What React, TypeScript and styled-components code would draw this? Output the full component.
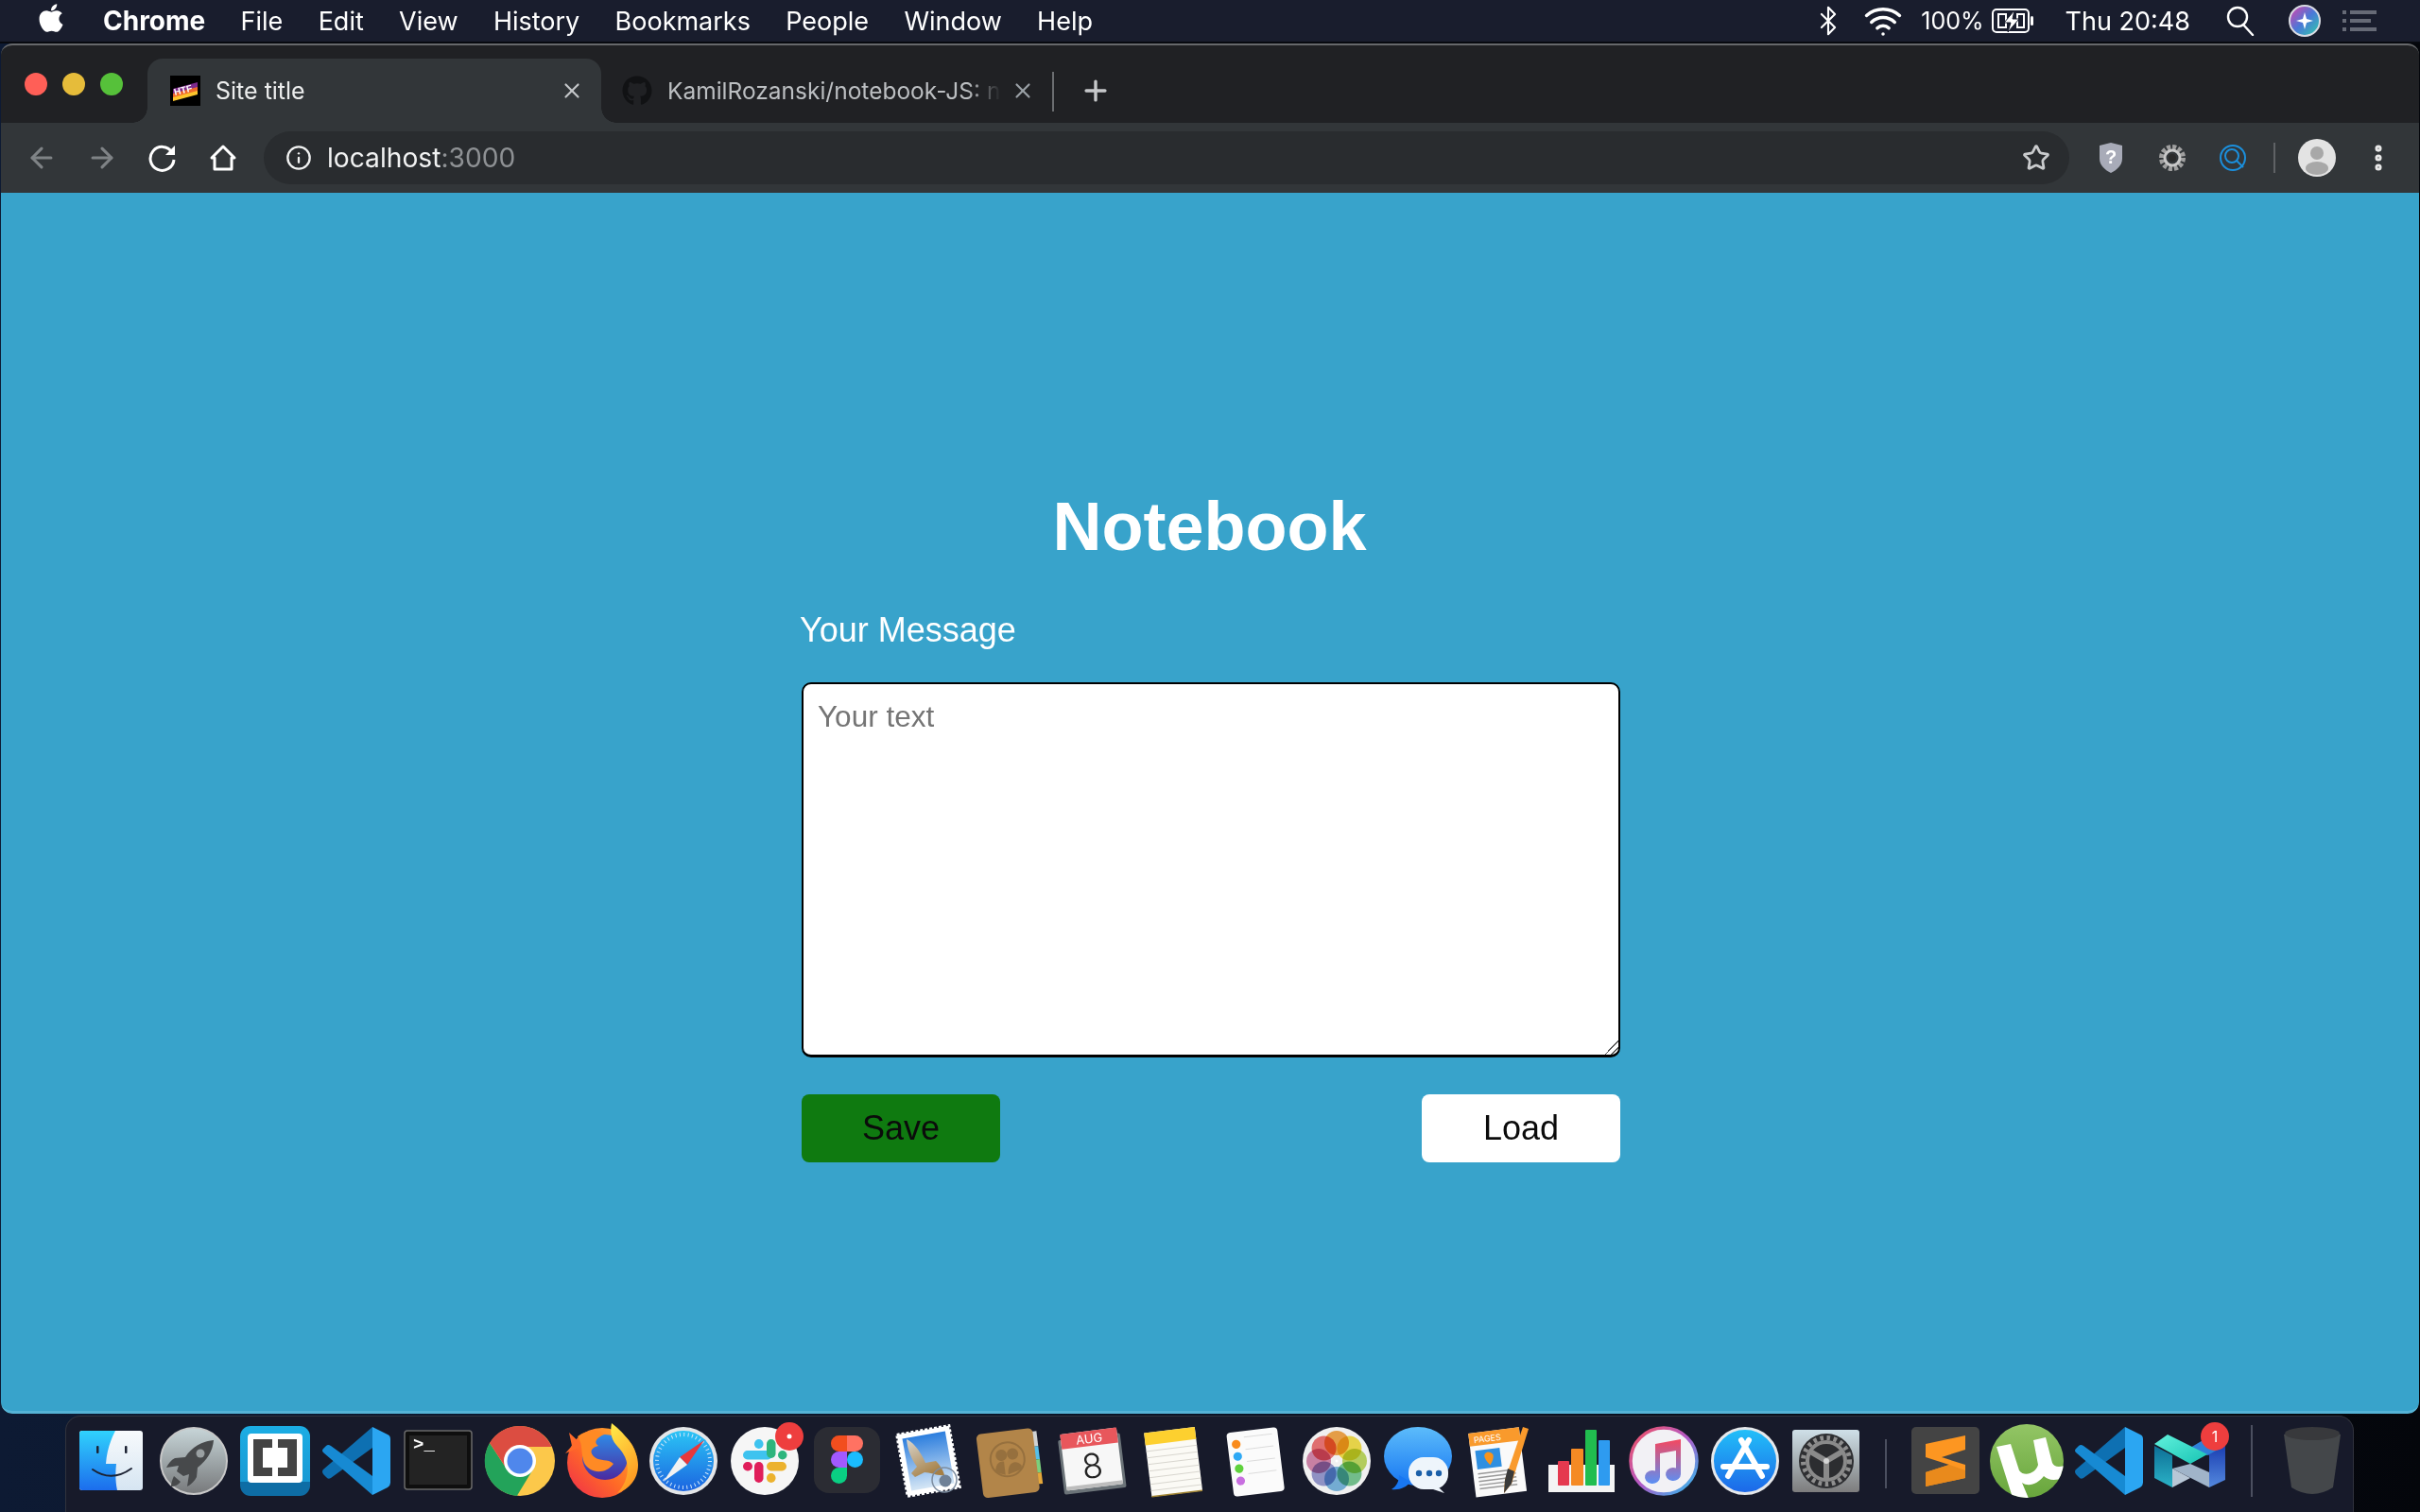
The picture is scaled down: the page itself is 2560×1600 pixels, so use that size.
import React from 'react';
import styled, { createGlobalStyle } from 'styled-components';
import { FaApple, FaGithub } from 'react-icons/fa';
import { ArrowLeft, ArrowRight, Bluetooth, Info, MoreVertical, Plus, Star, Wifi, X } from 'lucide-react';

const GlobalStyle = createGlobalStyle`
  html, body {
    margin: 0;
    padding: 0;
    background: #0b1222;
    overflow: hidden;
  }
`;

const Root = styled.div`
  width: 2560px;
  height: 1600px;
  display: flex;
  flex-direction: column;
  background: linear-gradient(90deg, #0d1a33 0%, #0a1122 60%, #04060b 100%);
  font-family: Inter, 'Noto Sans', sans-serif;
`;

/* macOS menu bar */
const MenuBar = styled.div`
  height: 44px;
  flex: none;
  display: flex;
  align-items: center;
  padding: 0 46px 0 39px;
  background: #191d2d;
  color: #fff;
  font-size: 27px;
  border-bottom: 2px solid #07090f;
`;

const AppleMark = styled(FaApple)`
  width: 30px;
  height: 34px;
  margin: -6px 40px 0 0;
`;

const MenuItem = styled.span<{ $bold?: boolean }>`
  margin-right: 37.3px;
  font-size: ${(p) => (p.$bold ? 28 : 27)}px;
  font-weight: ${(p) => (p.$bold ? 700 : 400)};
`;

const StatusArea = styled.div`
  margin-left: auto;
  display: flex;
  align-items: center;
`;

const StatusItem = styled.span<{ $gap: number; $size?: number }>`
  display: flex;
  align-items: center;
  margin-left: ${(p) => p.$gap}px;
  font-size: ${(p) => p.$size ?? 27}px;
`;

/* Browser window */
const Browser = styled.div`
  height: 1448px;
  flex: none;
  margin: 0 1px;
  display: flex;
  flex-direction: column;
  overflow: hidden;
  border-radius: 12px;
  border-top: 2px solid #66686b;
  background: #202124;
`;

const TabStrip = styled.div`
  height: 82px;
  flex: none;
  display: flex;
  align-items: flex-end;
  padding-left: 25px;
`;

const Lights = styled.div`
  align-self: flex-start;
  display: flex;
  gap: 16px;
  margin: 29px 26px 0 0;
`;

const Light = styled.span<{ $color: string }>`
  width: 24px;
  height: 24px;
  border-radius: 50%;
  background: ${(p) => p.$color};
`;

const ActiveTab = styled.div`
  position: relative;
  width: 480px;
  height: 68px;
  display: flex;
  align-items: center;
  padding: 0 18px 0 24px;
  box-sizing: border-box;
  border-radius: 16px 16px 0 0;
  background: #323639;
  color: #eceded;
  font-size: 25px;

  &::before,
  &::after {
    content: '';
    position: absolute;
    bottom: 0;
    width: 16px;
    height: 16px;
    background: radial-gradient(circle at var(--c), #202124 15.5px, #323639 16px);
  }
  &::before {
    left: -16px;
    --c: 0 0;
  }
  &::after {
    right: -16px;
    --c: 100% 0;
  }
`;

const Favicon = styled.svg`
  width: 32px;
  height: 32px;
  flex: none;
  margin-right: 16px;
`;

const TabClose = styled(X)<{ $dim?: boolean }>`
  width: 26px;
  height: 26px;
  flex: none;
  margin-left: auto;
  color: ${(p) => (p.$dim ? '#9aa0a6' : '#c4c7c9')};
`;

const IdleTab = styled.div`
  width: 477px;
  height: 68px;
  display: flex;
  align-items: center;
  padding: 0 18px 0 22px;
  box-sizing: border-box;
  color: #bcbfc2;
  font-size: 24.5px;
`;

const GithubMark = styled(FaGithub)`
  width: 32px;
  height: 32px;
  flex: none;
  margin-right: 16px;
  color: #111214;
`;

const FadedTitle = styled.span`
  width: 353px;
  overflow: hidden;
  white-space: nowrap;
  -webkit-mask-image: linear-gradient(90deg, #000 90%, transparent 100%);
  mask-image: linear-gradient(90deg, #000 90%, transparent 100%);
`;

const TabDivider = styled.span`
  width: 2px;
  height: 42px;
  margin-bottom: 12px;
  align-self: flex-end;
  background: #6b6e71;
`;

const NewTab = styled(Plus)`
  width: 34px;
  height: 34px;
  margin: 0 0 17px 27px;
  color: #c6c8ca;
`;

const Toolbar = styled.div`
  height: 74px;
  flex: none;
  display: flex;
  align-items: center;
  padding-left: 25px;
  background: #323639;
`;

const NavButton = styled.span<{ $dim?: boolean }>`
  width: 36px;
  height: 36px;
  display: flex;
  align-items: center;
  justify-content: center;
  margin-right: 28px;
  color: ${(p) => (p.$dim ? '#7f8386' : '#fff')};
`;

const Omnibox = styled.div`
  width: 1910px;
  height: 56px;
  margin-left: -3px;
  display: flex;
  align-items: center;
  padding: 0 20px 0 23px;
  box-sizing: border-box;
  border-radius: 28px;
  background: #292c2f;
  font-size: 28.2px;
  color: #f1f2f2;
`;

const Host = styled.span`
  margin-left: 16px;
`;

const Port = styled.span`
  color: #8e9194;
`;

const BookmarkStar = styled(Star)`
  width: 30px;
  height: 30px;
  margin-left: auto;
  color: #c9cbcd;
`;

const Extensions = styled.div`
  display: flex;
  align-items: center;
  margin-left: 29px;
`;

const ExtensionSlot = styled.span<{ $width: number; $gap?: number }>`
  width: ${(p) => p.$width}px;
  margin-left: ${(p) => p.$gap ?? 0}px;
  display: flex;
  justify-content: center;
  align-items: center;
  color: #e8e8e8;
`;

const ToolbarDivider = styled.span`
  width: 2px;
  height: 32px;
  margin: 0 24px 0 28px;
  background: #5f6265;
`;

/* The page itself */
const Page = styled.main`
  flex: 1;
  display: flex;
  flex-direction: column;
  align-items: center;
  padding-top: 312px;
  box-sizing: border-box;
  background: #38a3cb;
  border-bottom: 3px solid #55b3d6;
  font-family: 'Liberation Sans', Arial, sans-serif;
  border-radius: 0 0 12px 12px;
`;

const Notebook = styled.div`
  width: 866px;
  margin-left: 2px;
  display: flex;
  flex-direction: column;
`;

const Title = styled.h1`
  margin: 0 0 47px;
  padding-right: 3px;
  font-size: 72px;
  font-weight: 700;
  line-height: 83px;
  text-align: center;
  color: #fff;
`;

const FieldLabel = styled.label`
  display: block;
  margin: 0 0 35px -2px;
  font-size: 36px;
  line-height: 41px;
  color: #fff;
`;

const MessageInput = styled.textarea`
  display: block;
  width: 866px;
  height: 397px;
  padding: 16px 15px;
  box-sizing: border-box;
  border: 2px solid #000;
  border-bottom-width: 3px;
  border-radius: 10px;
  outline: none;
  background: #fff;
  font-family: 'Liberation Sans', Arial, sans-serif;
  font-size: 31.5px;

  &::-webkit-resizer {
    background: linear-gradient(
      135deg,
      transparent 50%,
      #555 50%,
      #555 56%,
      transparent 56%,
      transparent 72%,
      #555 72%,
      #555 78%,
      transparent 78%
    );
  }
`;

const Actions = styled.div`
  display: flex;
  justify-content: space-between;
  margin-top: 39px;
`;

const ActionButton = styled.button<{ $color: string }>`
  width: 210px;
  height: 72px;
  border: none;
  border-radius: 8px;
  background: ${(p) => p.$color};
  color: #0b0b0b;
  font-family: 'Liberation Sans', Arial, sans-serif;
  font-size: 36px;
`;

/* Dock */
const Dock = styled.div`
  width: 2421px;
  height: 102px;
  flex: none;
  box-sizing: border-box;
  margin: 2px 0 0 69px;
  padding: 7px 0 0 5px;
  display: flex;
  align-items: flex-start;
  border-radius: 16px 16px 0 0;
  border-top: 1px solid #30323c;
  border-left: 1px solid #30323c;
  border-right: 1px solid #30323c;
  background: #171a2a;
`;

const DockSlot = styled.div`
  width: 86.4px;
  flex: none;
  display: flex;
  justify-content: center;
`;

const DockDivider = styled.span<{ $height: number; $top: number; $width: number }>`
  width: ${(p) => p.$width}px;
  height: ${(p) => p.$height}px;
  flex: none;
  margin-top: ${(p) => p.$top}px;
  display: flex;
  justify-content: center;

  &::after {
    content: '';
    width: 2px;
    background: #4b4f5f;
  }
`;

const IconSvg = styled.svg`
  width: 80px;
  height: 80px;
  overflow: visible;
  display: block;
`;

const Icon = ({ children }: { children: React.ReactNode }) => (
  <IconSvg viewBox="0 0 80 80">{children}</IconSvg>
);

const Finder = () => (
  <Icon>
    <defs>
      <linearGradient id="fb" x1="0" y1="0" x2="0" y2="1">
        <stop offset="0" stopColor="#30d2fc" />
        <stop offset="1" stopColor="#1c6ded" />
      </linearGradient>
      <linearGradient id="fw" x1="0" y1="0" x2="0" y2="1">
        <stop offset="0" stopColor="#f7fafc" />
        <stop offset="1" stopColor="#d6e5f2" />
      </linearGradient>
    </defs>
    <rect x="6" y="8" width="67" height="63" rx="3" fill="url(#fw)" />
    <path d="M9 8H44C38 20 35 30 34 43H45C44 52 44 62 46 71H9a3 3 0 0 1-3-3V11a3 3 0 0 1 3-3Z" fill="url(#fb)" />
    <rect x="24" y="24" width="2.5" height="8" rx="1" fill="#1c2233" />
    <rect x="54" y="24" width="2.5" height="8" rx="1" fill="#1c2233" />
    <path d="M20 49Q40 63 61 48" fill="none" stroke="#1c2233" strokeWidth="2" strokeLinecap="round" />
  </Icon>
);

const Launchpad = () => (
  <Icon>
    <defs>
      <linearGradient id="lp" x1="0" y1="0" x2="0" y2="1">
        <stop offset="0" stopColor="#c7d5d8" />
        <stop offset="1" stopColor="#77797b" />
      </linearGradient>
    </defs>
    <circle cx="40" cy="40" r="35" fill="url(#lp)" stroke="#c8c8c8" strokeWidth="2" />
    <path d="M61 18C49 19 38 25 31 36L20 37C16 39 13 43 11 47L24 45L22 51L29 56L35 54L33 67C37 65 41 61 43 57L44 47C54 39 60 30 61 18Z" fill="#47494b" />
    <path d="M19 56C17 60 16 64 16 67C20 67 24 65 26 62Z" fill="#47494b" />
    <circle cx="47" cy="32" r="4.5" fill="#9aa0a2" />
  </Icon>
);

const BracketsApp = () => (
  <Icon>
    <defs>
      <linearGradient id="br" x1="0" y1="0" x2="0" y2="1">
        <stop offset="0" stopColor="#1badE4" />
        <stop offset="0.8" stopColor="#1a9ad4" />
        <stop offset="0.8" stopColor="#0e6da5" />
        <stop offset="1" stopColor="#0e6da5" />
      </linearGradient>
    </defs>
    <rect x="3" y="3" width="74" height="74" rx="11" fill="url(#br)" />
    <rect x="11" y="11" width="58" height="52" rx="4" fill="#fff" />
    <path d="M17 17H37V26H27V47H37V56H17Z" fill="#444" />
    <path d="M63 17H43V26H53V47H43V56H63Z" fill="#444" />
  </Icon>
);

const VsCode = () => (
  <Icon>
    <path d="M57 4V26L13 58Q10 60 8 57L5 54Q3 51 5 49Z" fill="#0e70b2" />
    <path d="M5 31Q3 29 5 27L8 24Q10 22 13 24L57 56V76Z" fill="#178ad3" />
    <path d="M57 4L73 12Q76 13 76 17V63Q76 66 73 68L57 76Z" fill="#2ba6f2" />
  </Icon>
);

const TerminalApp = () => (
  <Icon>
    <rect x="4" y="8" width="71" height="62" rx="3" fill="#0e0e0e" stroke="#6a6a6a" strokeWidth="1.5" />
    <rect x="9" y="13" width="61" height="52" fill="#232323" />
    <text x="13" y="28" fill="#fff" fontFamily="'Liberation Mono', monospace" fontSize="19" fontWeight="700">
      &gt;_
    </text>
  </Icon>
);

const ChromeApp = () => (
  <Icon>
    <circle cx="40" cy="40" r="37" fill="#fcc84a" />
    <path d="M8 21A37 37 0 0 0 36.8 76.9L55 47H25Z" fill="#23a35a" />
    <path d="M8 21A37 37 0 0 1 73.6 25H40L25 47Z" fill="#dc4d41" />
    <circle cx="40" cy="40" r="17" fill="#fff" />
    <circle cx="40" cy="40" r="13.5" fill="#4f87ec" />
  </Icon>
);

const Firefox = () => (
  <Icon>
    <defs>
      <linearGradient id="ffo" x1="1" y1="0" x2="0" y2="1">
        <stop offset="0" stopColor="#ffb52e" />
        <stop offset="0.55" stopColor="#ff6a26" />
        <stop offset="1" stopColor="#ef2a4e" />
      </linearGradient>
      <linearGradient id="ffy" x1="0" y1="0" x2="0.4" y2="1">
        <stop offset="0" stopColor="#ffec4a" />
        <stop offset="1" stopColor="#ff9a22" />
      </linearGradient>
      <linearGradient id="ffb" x1="0.5" y1="0" x2="0.5" y2="1">
        <stop offset="0" stopColor="#2f8ae6" />
        <stop offset="1" stopColor="#4b2aa0" />
      </linearGradient>
    </defs>
    <circle cx="40" cy="42" r="37" fill="url(#ffo)" />
    <path d="M5 10L8 24L1 32L20 24Z" fill="#ff6a2a" />
    <circle cx="43" cy="36" r="24" fill="url(#ffb)" />
    <path d="M14 14C24 7 34 6 42 12C35 15 30 20 36 24C28 26 26 31 32 36C38 41 46 37 52 43C42 56 26 52 21 42C17 32 20 22 14 14Z" fill="#ff8a24" />
    <path d="M50 0C68 14 78 30 78 44C78 60 68 70 56 74C68 62 70 44 62 32C58 24 46 20 50 0Z" fill="url(#ffy)" />
  </Icon>
);

const SafariApp = () => (
  <Icon>
    <defs>
      <linearGradient id="sf" x1="0" y1="0" x2="0" y2="1">
        <stop offset="0" stopColor="#2bc4f5" />
        <stop offset="1" stopColor="#1b64e0" />
      </linearGradient>
    </defs>
    <circle cx="40" cy="40" r="36" fill="#e4e6e8" />
    <circle cx="40" cy="40" r="32" fill="url(#sf)" />
    <circle cx="40" cy="40" r="28" fill="none" stroke="#cfe6fa" strokeWidth="4" strokeDasharray="1 3.4" />
    <polygon points="62,18 36,36 44,44" fill="#e8383c" />
    <polygon points="18.6,62 36,36 44,44" fill="#f2f2f2" />
  </Icon>
);

const DockBadge = ({ label }: { label?: string }) => (
  <>
    <circle cx="66" cy="14" r="15" fill="#ee3e3e" />
    {label ? (
      <text x="66" y="20" textAnchor="middle" fill="#fff" fontFamily="Inter, sans-serif" fontSize="16">
        {label}
      </text>
    ) : (
      <circle cx="66" cy="14" r="2.5" fill="#fff" />
    )}
  </>
);

const Slack = () => (
  <Icon>
    <circle cx="40" cy="40" r="36" fill="#f6f6f6" />
    <rect x="17" y="29" width="31" height="9.5" rx="4.7" fill="#3ec3ef" />
    <rect x="29" y="17" width="9.5" height="10" rx="4.7" fill="#3ec3ef" />
    <rect x="42" y="17" width="9.5" height="20" rx="4.7" fill="#2eb57d" />
    <rect x="54" y="29" width="9.5" height="9.5" rx="4.7" fill="#2eb57d" />
    <rect x="17" y="41" width="10" height="9.5" rx="4.7" fill="#e01e5a" />
    <rect x="29" y="41" width="9.5" height="22" rx="4.7" fill="#e01e5a" />
    <rect x="42" y="41" width="21" height="9.5" rx="4.7" fill="#ecb22e" />
    <rect x="42" y="53" width="9.5" height="10" rx="4.7" fill="#ecb22e" />
    <DockBadge />
  </Icon>
);

const Figma = () => (
  <Icon>
    <rect x="5" y="4" width="70" height="70" rx="16" fill="#2b2c33" />
    <path d="M40 13H31.5a8.5 8.5 0 0 0 0 17H40Z" fill="#f24e1e" />
    <path d="M40 13H48.5a8.5 8.5 0 0 1 0 17H40Z" fill="#ff7262" />
    <path d="M40 30H31.5a8.5 8.5 0 0 0 0 17H40Z" fill="#a259ff" />
    <circle cx="48.5" cy="38.5" r="8.5" fill="#1abcfe" />
    <path d="M40 47H31.5a8.5 8.5 0 1 0 8.5 8.5Z" fill="#0acf83" />
  </Icon>
);

const MailApp = () => (
  <Icon>
    <defs>
      <linearGradient id="ml" x1="0" y1="0" x2="0" y2="1">
        <stop offset="0" stopColor="#2c7ede" />
        <stop offset="1" stopColor="#d5e6f5" />
      </linearGradient>
      <linearGradient id="hawk" x1="0" y1="0" x2="0.6" y2="1">
        <stop offset="0" stopColor="#d9d6cf" />
        <stop offset="1" stopColor="#a57f45" />
      </linearGradient>
    </defs>
    <g transform="rotate(-10 40 40)">
      <rect x="12" y="7" width="56" height="66" fill="#fff" stroke="#fff" strokeWidth="3" strokeDasharray="3 2" />
      <rect x="17" y="12" width="46" height="56" fill="url(#ml)" />
    </g>
    <path d="M17 17C24 20 32 30 37 42L48 40C52 44 56 50 57 55C50 56 42 52 36 52L26 57L22 53L28 46C22 38 18 28 17 17Z" fill="url(#hawk)" />
    <circle cx="57" cy="60" r="13" fill="none" stroke="#7d8da0" strokeWidth="1.5" />
    <circle cx="58" cy="61" r="6.5" fill="#6f8197" />
  </Icon>
);

const ContactsApp = () => (
  <Icon>
    <g transform="rotate(-7 40 40)">
      <rect x="66" y="12" width="6" height="16" fill="#cfd2d4" />
      <rect x="66" y="28" width="6" height="14" fill="#56bfe8" />
      <rect x="66" y="42" width="6" height="14" fill="#7ccf7c" />
      <rect x="66" y="56" width="6" height="12" fill="#e5a83a" />
      <rect x="8" y="8" width="60" height="68" rx="5" fill="#b28549" />
      <circle cx="38" cy="38" r="18" fill="none" stroke="#96703e" strokeWidth="2" />
      <circle cx="32" cy="33" r="6" fill="#96703e" />
      <circle cx="44" cy="33" r="6" fill="#96703e" />
      <path d="M24 50C24 42 30 38 34 40V54Z" fill="#96703e" />
      <path d="M37 54C37 42 46 38 52 46V50Z" fill="#96703e" />
    </g>
  </Icon>
);

const CalendarApp = () => (
  <Icon>
    <g transform="rotate(-7 40 40)">
      <rect x="7" y="14" width="66" height="58" rx="2" fill="#6b7378" />
      <rect x="10" y="8" width="60" height="60" rx="2" fill="#f7f7f7" />
      <path d="M10 8H70V24H10Z" fill="#e8575c" />
      <text x="40" y="21" textAnchor="middle" fill="#fff" fontFamily="Inter, sans-serif" fontSize="13">
        AUG
      </text>
      <text x="40" y="58" textAnchor="middle" fill="#222" fontFamily="Inter, sans-serif" fontSize="36" fontWeight="300">
        8
      </text>
      <rect x="10" y="64" width="60" height="4" fill="#bdbdbd" />
    </g>
  </Icon>
);

const NotesApp = () => (
  <Icon>
    <g transform="rotate(-7 40 40)">
      <rect x="13" y="7" width="54" height="68" fill="#fbfaf5" />
      <rect x="13" y="7" width="54" height="13" fill="#fdd02f" />
      {[26, 33, 40, 47, 54, 61, 68].map((y) => (
        <rect key={y} x="13" y={y} width="54" height="1" fill="#d8d6cf" />
      ))}
      <rect x="13" y="74" width="54" height="1.5" fill="#a08330" />
    </g>
  </Icon>
);

const reminderDots: [string, number][] = [
  ['#f98b1c', 20],
  ['#2ea9f5', 33],
  ['#5fd23c', 46],
  ['#c86fe0', 59],
];

const RemindersApp = () => (
  <Icon>
    <g transform="rotate(-7 40 40)">
      <rect x="13" y="7" width="54" height="68" rx="4" fill="#fbfbfb" />
      {reminderDots.map(([color, y]) => (
        <React.Fragment key={color}>
          <circle cx="22" cy={y} r="4.6" fill={color} />
          <rect x="31" y={y - 7} width="30" height="1" fill="#dcdcdc" />
        </React.Fragment>
      ))}
    </g>
  </Icon>
);

const PhotosApp = () => (
  <Icon>
    <circle cx="40" cy="40" r="36" fill="#f0f0f0" />
    {['#f2a03b', '#f4dd3e', '#b9d654', '#6dc48a', '#70b1de', '#8f93cd', '#d17ea6', '#ec6a6a'].map((color, i) => (
      <circle
        key={color}
        cx="40"
        cy="21"
        r="13"
        fill={color}
        opacity="0.92"
        style={{ mixBlendMode: 'multiply' }}
        transform={`rotate(${i * 45} 40 40)`}
      />
    ))}
    <circle cx="40" cy="40" r="1.5" fill="#fff" />
  </Icon>
);

const MessagesApp = () => (
  <Icon>
    <defs>
      <linearGradient id="mg" x1="0" y1="0" x2="0" y2="1">
        <stop offset="0" stopColor="#5cbcfb" />
        <stop offset="1" stopColor="#1877f2" />
      </linearGradient>
    </defs>
    <ellipse cx="40" cy="35" rx="36" ry="31" fill="url(#mg)" />
    <path d="M20 55C20 62 17 67 12 70C20 71 28 68 32 62Z" fill="#1877f2" />
    <rect x="30" y="36" width="42" height="34" rx="16" fill="#eef5fb" />
    <path d="M60 66L68 74L56 70Z" fill="#eef5fb" />
    {[41, 52, 62].map((x) => (
      <circle key={x} cx={x} cy="53" r="3.2" fill="#1a5fa8" />
    ))}
  </Icon>
);

const PagesApp = () => (
  <Icon>
    <g transform="rotate(-7 40 40)">
      <rect x="10" y="7" width="54" height="68" fill="#fafafa" />
      <rect x="10" y="7" width="54" height="14" fill="#f99a2c" />
      <text x="15" y="18" fill="#fff" fontFamily="Inter, sans-serif" fontSize="9">
        PAGES
      </text>
      <rect x="15" y="26" width="26" height="20" fill="#2f8fe0" />
      <path d="M28 29C34 30 36 34 29 43C22 34 23 30 28 29Z" fill="#f7941d" />
      {[50, 54, 58, 62, 66].map((y) => (
        <rect key={y} x="15" y={y} width="40" height="1.5" fill="#9a9a9a" />
      ))}
    </g>
    <path d="M64 4L70 6L52 64L44 74L45 60Z" fill="#f99a2c" />
    <path d="M48 48L55 51L52 64L44 74L45 60Z" fill="#3a3a3a" />
  </Icon>
);

const NumbersApp = () => (
  <Icon>
    <rect x="5" y="44" width="70" height="29" fill="#f4f4f4" />
    <rect x="15" y="40" width="12" height="26" rx="1" fill="#e5394f" />
    <rect x="29" y="27" width="13" height="39" rx="1" fill="#f58a24" />
    <rect x="44" y="7" width="12" height="59" rx="1" fill="#21bd4f" />
    <rect x="58" y="18" width="12" height="48" rx="1" fill="#2e9bf0" />
  </Icon>
);

const ITunes = () => (
  <Icon>
    <defs>
      <linearGradient id="it" x1="0" y1="0" x2="1" y2="1">
        <stop offset="0" stopColor="#f4515e" />
        <stop offset="0.5" stopColor="#b25ac8" />
        <stop offset="1" stopColor="#26c0ef" />
      </linearGradient>
      <linearGradient id="nt" x1="0" y1="0" x2="0" y2="1">
        <stop offset="0" stopColor="#f5475f" />
        <stop offset="1" stopColor="#5a90f5" />
      </linearGradient>
    </defs>
    <circle cx="40" cy="40" r="35" fill="#f2f1f5" stroke="url(#it)" strokeWidth="3.5" />
    <path d="M31 22L58 17V54A8 7 0 1 1 53 47.5V29L36 32V57A8 7 0 1 1 31 50.5Z" fill="url(#nt)" />
  </Icon>
);

const AppStore = () => (
  <Icon>
    <defs>
      <linearGradient id="as" x1="0" y1="0" x2="0" y2="1">
        <stop offset="0" stopColor="#22c1f9" />
        <stop offset="1" stopColor="#1c66e8" />
      </linearGradient>
    </defs>
    <circle cx="40" cy="40" r="34.5" fill="url(#as)" stroke="#e6e8ea" strokeWidth="3" />
    <path d="M22 56L44 18M36 18L58 56M17 46H63" fill="none" stroke="#fff" strokeWidth="6" strokeLinecap="round" />
  </Icon>
);

const SystemPrefs = () => (
  <Icon>
    <defs>
      <linearGradient id="sp" x1="0" y1="0" x2="0" y2="1">
        <stop offset="0" stopColor="#cfe0e8" />
        <stop offset="1" stopColor="#7d7d7d" />
      </linearGradient>
    </defs>
    <rect x="4" y="7" width="71" height="66" rx="3" fill="url(#sp)" />
    <circle cx="40" cy="40" r="29" fill="#2e2f32" />
    <circle cx="40" cy="40" r="24.5" fill="none" stroke="#8f8f8f" strokeWidth="5" strokeDasharray="3.6 3.6" />
    <circle cx="40" cy="40" r="20" fill="#2c2d30" stroke="#8a8a8a" strokeWidth="4" />
    <path d="M40 40V60M40 40L23 30M40 40L57 30" stroke="#8a8a8a" strokeWidth="6" />
    <circle cx="40" cy="40" r="3" fill="#d5d5d5" />
  </Icon>
);

const Sublime = () => (
  <Icon>
    <rect x="4" y="4" width="72" height="71" rx="5" fill="#444" />
    <path d="M61 13V28L36 36L61 44V58L19 67V52L44 44L19 36V22Z" fill="#fd9621" />
    <path d="M19 52L44 44L61 50V58L19 67Z" fill="#e98a1c" />
  </Icon>
);

const UTorrent = () => (
  <Icon>
    <defs>
      <linearGradient id="ut" x1="0" y1="0" x2="0" y2="1">
        <stop offset="0" stopColor="#93c565" />
        <stop offset="1" stopColor="#68a63c" />
      </linearGradient>
      <clipPath id="utc">
        <circle cx="40" cy="40" r="39" />
      </clipPath>
    </defs>
    <circle cx="40" cy="40" r="39" fill="url(#ut)" />
    <path
      clipPath="url(#utc)"
      d="M8 25L23 22L32 50C38 58 50 52 52 44L47 18L60 15L67 42C69 46 73 47 80 45V57C70 62 62 60 58 56C52 64 42 68 35 63L43 82H26Z"
      fill="#fff"
    />
  </Icon>
);

const MindNode = () => (
  <Icon>
    <defs>
      <linearGradient id="mnl" x1="0" y1="0" x2="0" y2="1">
        <stop offset="0" stopColor="#0d6f96" />
        <stop offset="1" stopColor="#2bb3c7" />
      </linearGradient>
      <linearGradient id="mnr" x1="0" y1="0" x2="0" y2="1">
        <stop offset="0" stopColor="#1b3fb2" />
        <stop offset="1" stopColor="#5489de" />
      </linearGradient>
      <linearGradient id="mnt" x1="0" y1="0" x2="1" y2="1">
        <stop offset="0" stopColor="#62f2dd" />
        <stop offset="1" stopColor="#18c4b4" />
      </linearGradient>
    </defs>
    <path d="M2 24L21 34V68L2 58Z" fill="url(#mnl)" />
    <path d="M21 48L40 43L60 52V68L21 48Z" fill="#a0b4c9" />
    <path d="M21 68V48L40 58Z" fill="#b8c7d6" />
    <path d="M58 33L77 24V60L60 68V34Z" fill="url(#mnr)" />
    <path d="M40 26L60 14L77 24L58 34Z" fill="#2f7fd8" />
    <path d="M2 22L16 12L58 33L40 43Z" fill="url(#mnt)" />
    <DockBadge label="1" />
  </Icon>
);

const Trash = () => (
  <Icon>
    <path d="M10 12Q40 0 70 12L62 68Q40 82 18 68Z" fill="#44474a" />
    <ellipse cx="40" cy="11" rx="29" ry="7" fill="#38393c" />
  </Icon>
);

const mainApps = [
  Finder, Launchpad, BracketsApp, VsCode, TerminalApp, ChromeApp, Firefox, SafariApp, Slack, Figma, MailApp,
  ContactsApp, CalendarApp, NotesApp, RemindersApp, PhotosApp, MessagesApp, PagesApp, NumbersApp, ITunes, AppStore,
  SystemPrefs,
];
const recentApps = [Sublime, UTorrent, VsCode, MindNode];

const BatteryIcon = () => (
  <svg width="46" height="28" viewBox="0 0 46 28">
    <rect x="1" y="2" width="38" height="24" rx="4" fill="none" stroke="#fff" strokeWidth="2" />
    <rect x="41" y="9" width="3" height="10" rx="1.5" fill="#fff" />
    <path d="M7 7H15V21H7ZM27 7H34V21H27Z" fill="none" stroke="#fff" strokeWidth="2" />
    <path d="M24 3L13 16H20L17 26L29 12H22Z" fill="#fff" stroke="#191d2d" />
  </svg>
);

const SearchGlass = () => (
  <svg width="30" height="32" viewBox="0 0 30 32" fill="none" stroke="#fff" strokeWidth="2.4">
    <circle cx="12" cy="12" r="10" />
    <path d="M18 20L28 31" strokeLinecap="round" />
  </svg>
);

const SiriIcon = () => (
  <svg width="34" height="34" viewBox="0 0 34 34">
    <defs>
      <linearGradient id="siri" x1="0" y1="0" x2="1" y2="1">
        <stop offset="0" stopColor="#e23fa8" />
        <stop offset="0.5" stopColor="#4a78d8" />
        <stop offset="1" stopColor="#2fd0a8" />
      </linearGradient>
    </defs>
    <circle cx="17" cy="17" r="16" fill="url(#siri)" stroke="#d9dbe3" strokeWidth="2" />
    <path d="M17 8L19 15L26 17L19 19L17 26L15 19L8 17L15 15Z" fill="#fff" />
  </svg>
);

const NotificationIcon = () => (
  <svg width="36" height="24" viewBox="0 0 36 24" fill="#666a76">
    <rect x="0" y="1" width="4" height="4" />
    <rect x="8" y="1" width="28" height="4" />
    <rect x="0" y="10" width="4" height="4" />
    <rect x="8" y="10" width="22" height="4" />
    <rect x="0" y="19" width="4" height="4" />
    <rect x="8" y="19" width="28" height="4" />
  </svg>
);

const App = () => (
  <Root>
    <GlobalStyle />
    <MenuBar>
      <AppleMark />
      <MenuItem $bold>Chrome</MenuItem>
      {['File', 'Edit', 'View', 'History', 'Bookmarks', 'People', 'Window', 'Help'].map((item) => (
        <MenuItem key={item}>{item}</MenuItem>
      ))}
      <StatusArea>
        <StatusItem $gap={0}>
          <Bluetooth size={34} strokeWidth={1.5} />
        </StatusItem>
        <StatusItem $gap={20}>
          <Wifi size={42} strokeWidth={2} />
        </StatusItem>
        <StatusItem $gap={19} $size={25}>
          100%
        </StatusItem>
        <StatusItem $gap={8}>
          <BatteryIcon />
        </StatusItem>
        <StatusItem $gap={32}>Thu 20:48</StatusItem>
        <StatusItem $gap={38}>
          <SearchGlass />
        </StatusItem>
        <StatusItem $gap={36}>
          <SiriIcon />
        </StatusItem>
        <StatusItem $gap={23}>
          <NotificationIcon />
        </StatusItem>
      </StatusArea>
    </MenuBar>

    <Browser>
      <TabStrip>
        <Lights>
          <Light $color="#ff5f57" />
          <Light $color="#e6bc3a" />
          <Light $color="#56c13a" />
        </Lights>
        <ActiveTab>
          <Favicon viewBox="0 0 32 32">
            <rect width="32" height="32" fill="#000" />
            <polygon points="3,14 29,7 29,17 3,25" fill="#7d2a8c" />
            <polygon points="3,19 29,12 29,18 3,26" fill="#ef6a2a" />
            <polygon points="3,23 29,16 29,20 3,27" fill="#fcc52c" />
            <text x="5" y="21" fill="#fff" fontFamily="'Liberation Sans', sans-serif" fontSize="10" fontWeight="700" transform="rotate(-14 5 21)">
              HTF
            </text>
          </Favicon>
          Site title
          <TabClose strokeWidth={2} />
        </ActiveTab>
        <IdleTab>
          <GithubMark />
          <FadedTitle>KamilRozanski/notebook-JS: notebook</FadedTitle>
          <TabClose $dim strokeWidth={2} />
        </IdleTab>
        <TabDivider />
        <NewTab strokeWidth={2.4} />
      </TabStrip>

      <Toolbar>
        <NavButton $dim>
          <ArrowLeft size={34} strokeWidth={2.2} />
        </NavButton>
        <NavButton $dim>
          <ArrowRight size={34} strokeWidth={2.2} />
        </NavButton>
        <NavButton>
          <svg width="30" height="30" viewBox="0 0 30 30" fill="none">
            <path d="M25 9A12.5 12.5 0 1 0 27 17" stroke="#fff" strokeWidth="3" />
            <path d="M28 2V12H18Z" fill="#fff" />
          </svg>
        </NavButton>
        <NavButton>
          <svg width="30" height="30" viewBox="0 0 30 30" fill="none">
            <path d="M15 3L27 15H24V27H6V15H3Z" stroke="#fff" strokeWidth="3" strokeLinejoin="round" />
          </svg>
        </NavButton>
        <Omnibox>
          <Info size={28} strokeWidth={2} />
          <Host>
            localhost<Port>:3000</Port>
          </Host>
          <BookmarkStar strokeWidth={2.2} />
        </Omnibox>
        <Extensions>
          <ExtensionSlot $width={30}>
            <svg width="28" height="34" viewBox="0 0 28 32">
              <path d="M2 3L14 0L26 3V17C26 24 20 29 14 32C8 29 2 24 2 17Z" fill="#a8abb8" />
              <text x="14" y="22" textAnchor="middle" fill="#fff" fontFamily="'Liberation Sans', sans-serif" fontSize="20" fontWeight="700">
                ?
              </text>
            </svg>
          </ExtensionSlot>
          <ExtensionSlot $width={36} $gap={32}>
            <svg width="30" height="30" viewBox="0 0 30 30" fill="none">
              <circle cx="15" cy="15" r="11.5" stroke="#a0a0a0" strokeWidth="5" strokeDasharray="4 2" />
              <circle cx="15" cy="15" r="8" stroke="#c8c8c8" strokeWidth="3" />
              <circle cx="15" cy="15" r="4" fill="#2a2a2a" />
            </svg>
          </ExtensionSlot>
          <ExtensionSlot $width={30} $gap={31}>
            <svg width="28" height="30" viewBox="0 0 28 30" fill="none" stroke="#1b8fdc" strokeWidth="2">
              <circle cx="14" cy="15" r="13" />
              <circle cx="13" cy="13" r="7" />
              <path d="M18 18L25 25" />
            </svg>
          </ExtensionSlot>
          <ToolbarDivider />
          <ExtensionSlot $width={40}>
            <svg width="40" height="40" viewBox="0 0 40 40">
              <circle cx="20" cy="20" r="20" fill="#e3e3e3" />
              <circle cx="20" cy="15" r="7" fill="#a8a8a8" />
              <ellipse cx="20" cy="31" rx="12" ry="7" fill="#a8a8a8" />
            </svg>
          </ExtensionSlot>
          <ExtensionSlot $width={36} $gap={27}>
            <MoreVertical size={34} strokeWidth={3} />
          </ExtensionSlot>
        </Extensions>
      </Toolbar>

      <Page>
        <Notebook>
          <Title>Notebook</Title>
          <FieldLabel htmlFor="message">Your Message</FieldLabel>
          <MessageInput id="message" placeholder="Your text" />
          <Actions>
            <ActionButton $color="#0f7a10">Save</ActionButton>
            <ActionButton $color="#fff">Load</ActionButton>
          </Actions>
        </Notebook>
      </Page>
    </Browser>

    <Dock>
      {mainApps.map((AppIcon, i) => (
        <DockSlot key={i}>
          <AppIcon />
        </DockSlot>
      ))}
      <DockDivider $width={39} $height={52} $top={17} />
      {recentApps.map((AppIcon, i) => (
        <DockSlot key={i}>
          <AppIcon />
        </DockSlot>
      ))}
      <DockDivider $width={43} $height={76} $top={2} />
      <DockSlot>
        <Trash />
      </DockSlot>
    </Dock>
  </Root>
);

export default App;
